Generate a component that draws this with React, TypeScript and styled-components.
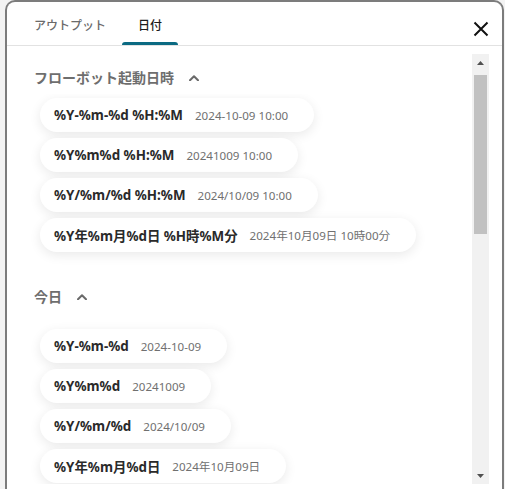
import { useEffect, useRef, useState } from 'react';
import styled, { createGlobalStyle } from 'styled-components';

interface FormatItem {
  format: string;
  sample: string;
}

interface Section {
  title: string;
  items: FormatItem[];
}

const SECTIONS: Section[] = [
  {
    title: 'フローボット起動日時',
    items: [
      { format: '%Y-%m-%d %H:%M', sample: '2024-10-09 10:00' },
      { format: '%Y%m%d %H:%M', sample: '20241009 10:00' },
      { format: '%Y/%m/%d %H:%M', sample: '2024/10/09 10:00' },
      { format: '%Y年%m月%d日 %H時%M分', sample: '2024年10月09日 10時00分' },
    ],
  },
  {
    title: '今日',
    items: [
      { format: '%Y-%m-%d', sample: '2024-10-09' },
      { format: '%Y%m%d', sample: '20241009' },
      { format: '%Y/%m/%d', sample: '2024/10/09' },
      { format: '%Y年%m月%d日', sample: '2024年10月09日' },
    ],
  },
  {
    title: '昨日',
    items: [
      { format: '%Y-%m-%d', sample: '2024-10-08' },
      { format: '%Y%m%d', sample: '20241008' },
      { format: '%Y/%m/%d', sample: '2024/10/08' },
      { format: '%Y年%m月%d日', sample: '2024年10月08日' },
    ],
  },
  {
    title: '明日',
    items: [
      { format: '%Y-%m-%d', sample: '2024-10-10' },
      { format: '%Y%m%d', sample: '20241010' },
      { format: '%Y/%m/%d', sample: '2024/10/10' },
      { format: '%Y年%m月%d日', sample: '2024年10月10日' },
    ],
  },
  {
    title: '現在時刻',
    items: [
      { format: '%H:%M', sample: '10:00' },
      { format: '%H時%M分', sample: '10時00分' },
    ],
  },
];

const ARROW_SIZE = 17;

const GlobalStyle = createGlobalStyle`
  html, body {
    margin: 0;
    height: 100%;
    overflow: hidden;
    background: #f3f3f3;
  }
  body {
    font-family: "Noto Sans", "Noto Sans CJK JP", sans-serif;
  }
`;

const ChevronUp = () => (
  <svg width="10" height="6" viewBox="0 0 10 6" fill="none">
    <polyline
      points="1,5.2 5,1.2 9,5.2"
      stroke="#6a6a6a"
      strokeWidth="2"
      strokeLinecap="round"
      strokeLinejoin="round"
    />
  </svg>
);

const CloseIcon = () => (
  <svg width="16" height="16" viewBox="0 0 16 16" fill="none">
    <path d="M1.5 1.5 L14.5 14.5 M14.5 1.5 L1.5 14.5" stroke="#111" strokeWidth="2" />
  </svg>
);

const Triangle = ({ down }: { down?: boolean }) => (
  <svg width="7" height="4" viewBox="0 0 7 4">
    <polygon points={down ? '0,0 7,0 3.5,4' : '0,4 7,4 3.5,0'} fill="#505050" />
  </svg>
);

export default function App() {
  const scrollRef = useRef<HTMLDivElement>(null);
  const [thumb, setThumb] = useState({ top: 0, height: 0 });

  const updateThumb = () => {
    const el = scrollRef.current;
    if (!el) return;
    const track = el.clientHeight - ARROW_SIZE * 2;
    const height = (el.clientHeight / el.scrollHeight) * track;
    const max = el.scrollHeight - el.clientHeight;
    const top = max > 0 ? (el.scrollTop / max) * (track - height) : 0;
    setThumb({ top, height });
  };

  useEffect(() => {
    if (scrollRef.current) scrollRef.current.scrollTop = 12;
    updateThumb();
  }, []);

  return (
    <>
      <GlobalStyle />
      <Dialog>
        <Header>
          <Tab>アウトプット</Tab>
          <Tab active>日付</Tab>
          <CloseButton aria-label="閉じる">
            <CloseIcon />
          </CloseButton>
        </Header>
        <Body>
          <ScrollArea ref={scrollRef} onScroll={updateThumb}>
            {SECTIONS.map(section => (
              <SectionBox key={section.title}>
                <SectionHeader>
                  <span>{section.title}</span>
                  <ChevronUp />
                </SectionHeader>
                <ChipList>
                  {section.items.map(item => (
                    <Chip key={item.format}>
                      <Format>{item.format}</Format>
                      <Sample>{item.sample}</Sample>
                    </Chip>
                  ))}
                </ChipList>
              </SectionBox>
            ))}
          </ScrollArea>
          <ScrollRail>
            <ArrowButton>
              <Triangle />
            </ArrowButton>
            <Track>
              <Thumb style={{ top: thumb.top, height: thumb.height }} />
            </Track>
            <ArrowButton>
              <Triangle down />
            </ArrowButton>
          </ScrollRail>
        </Body>
      </Dialog>
    </>
  );
}

const Dialog = styled.div`
  box-sizing: border-box;
  height: 100vh;
  margin: 0 1px 0 5px;
  background: #fff;
  border: 2px solid #7c7c7c;
  border-bottom: none;
  border-radius: 10px 10px 0 0;
  display: flex;
  flex-direction: column;
`;

const Header = styled.div`
  display: flex;
  height: 43px;
  padding: 0 13px 0 11px;
  border-bottom: 1px solid #e2e2e2;
  flex-shrink: 0;
`;

const Tab = styled.div<{ active?: boolean }>`
  position: relative;
  display: flex;
  align-items: center;
  padding: 3px 16px 0;
  font-size: 12px;
  font-weight: 500;
  color: ${({ active }) => (active ? '#1c1c1c' : '#6a6a6a')};

  &::after {
    content: '';
    display: ${({ active }) => (active ? 'block' : 'none')};
    position: absolute;
    left: 0;
    right: 0;
    bottom: 0;
    height: 3px;
    border-radius: 3px 3px 0 0;
    background: #0b6a82;
  }
`;

const CloseButton = styled.div`
  margin-left: auto;
  margin-top: 18px;
  width: 16px;
  height: 16px;
  cursor: pointer;
`;

const Body = styled.div`
  display: flex;
  height: 430px;
  padding: 8px 13px 0 0;
`;

const ScrollArea = styled.div`
  flex: 1;
  height: 100%;
  overflow-y: scroll;
  padding-left: 27px;
  scrollbar-width: none;

  &::-webkit-scrollbar {
    display: none;
  }
`;

const ScrollRail = styled.div`
  display: flex;
  flex-direction: column;
  width: 17px;
  height: 100%;
  background: #f1f1f1;
`;

const ArrowButton = styled.div`
  display: flex;
  align-items: center;
  justify-content: center;
  height: ${ARROW_SIZE}px;
  flex-shrink: 0;
`;

const Track = styled.div`
  position: relative;
  flex: 1;
`;

const Thumb = styled.div`
  position: absolute;
  left: 2px;
  right: 2px;
  background: #c1c1c1;
`;

const SectionBox = styled.section`
  padding-bottom: 21px;
`;

const SectionHeader = styled.div`
  position: sticky;
  top: 0;
  z-index: 1;
  display: flex;
  align-items: center;
  gap: 15px;
  padding: 14px 0 6px;
  background: #fff;
  font-size: 14px;
  line-height: 20px;
  font-weight: 700;
  color: #6e6e6e;
`;

const ChipList = styled.div`
  display: flex;
  flex-direction: column;
  align-items: flex-start;
  gap: 6px;
  margin-top: 16px;
  padding-left: 6px;
`;

const Chip = styled.div`
  display: flex;
  align-items: center;
  gap: 12px;
  height: 34px;
  padding: 0 26px 0 14px;
  border-radius: 17px;
  background: #fff;
  box-shadow: 0 3px 12px rgba(0, 0, 0, 0.09);
  cursor: pointer;
`;

const Format = styled.span`
  font-size: 13.4px;
  font-weight: 700;
  color: #2a2a2a;
  white-space: nowrap;
`;

const Sample = styled.span`
  font-size: 11.6px;
  color: #707070;
  white-space: nowrap;
`;
